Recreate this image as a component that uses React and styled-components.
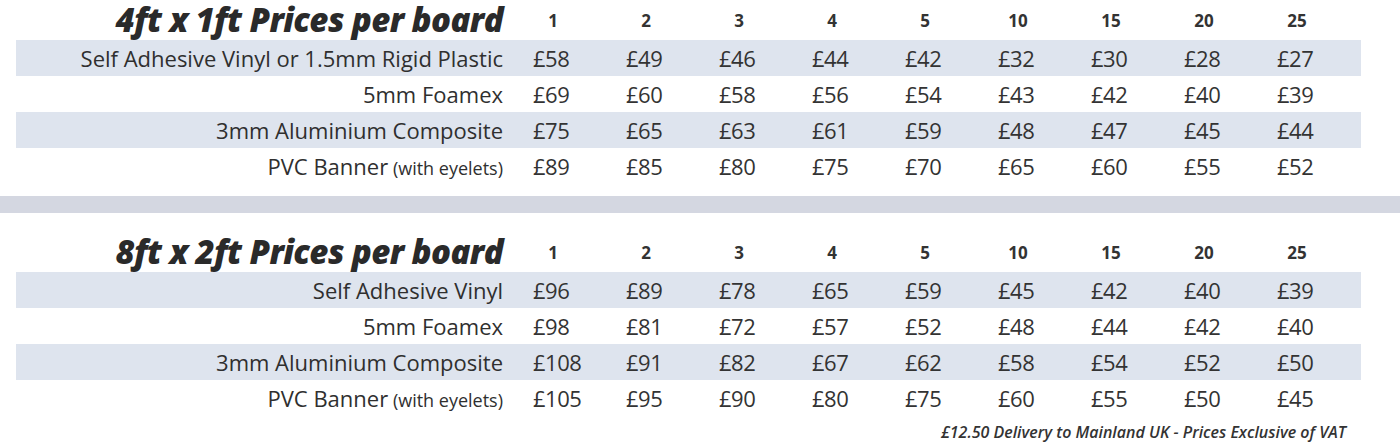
import React from 'react';
import styled, { createGlobalStyle } from 'styled-components';

const GlobalStyle = createGlobalStyle`
  html, body {
    margin: 0;
    padding: 0;
    background: #fff;
  }
  body {
    font-family: 'Open Sans', 'Liberation Sans', sans-serif;
    color: #333;
  }
`;

const QTY = ['1', '2', '3', '4', '5', '10', '15', '20', '25'];

const tables = [
  {
    title: '4ft x 1ft Prices per board',
    rows: [
      { name: 'Self Adhesive Vinyl or 1.5mm Rigid Plastic', prices: [58, 49, 46, 44, 42, 32, 30, 28, 27] },
      { name: '5mm Foamex', prices: [69, 60, 58, 56, 54, 43, 42, 40, 39] },
      { name: '3mm Aluminium Composite', prices: [75, 65, 63, 61, 59, 48, 47, 45, 44] },
      { name: 'PVC Banner', note: '(with eyelets)', prices: [89, 85, 80, 75, 70, 65, 60, 55, 52] },
    ],
  },
  {
    title: '8ft x 2ft Prices per board',
    rows: [
      { name: 'Self Adhesive Vinyl', prices: [96, 89, 78, 65, 59, 45, 42, 40, 39] },
      { name: '5mm Foamex', prices: [98, 81, 72, 57, 52, 48, 44, 42, 40] },
      { name: '3mm Aluminium Composite', prices: [108, 91, 82, 67, 62, 58, 54, 52, 50] },
      { name: 'PVC Banner', note: '(with eyelets)', prices: [105, 95, 90, 80, 75, 60, 55, 50, 45] },
    ],
  },
];

const Page = styled.div`
  width: 1400px;
`;

const Table = styled.section`
  margin-left: 16px;
  width: 1345px;
`;

const Row = styled.div`
  display: grid;
  grid-template-columns: 487px repeat(9, 93px);
  align-items: center;
  height: ${p => (p.$head ? '40px' : '36px')};
  background: ${p => (p.$shaded ? '#dee4ee' : 'transparent')};
`;

const Title = styled.h2`
  margin: 0;
  text-align: right;
  font-family: 'Open Sans', sans-serif;
  font-weight: 800;
  font-style: italic;
  font-size: 33px;
  letter-spacing: -0.6px;
  color: #2a2a2a;
  line-height: 40px;
  white-space: nowrap;
`;

const Qty = styled.div`
  padding-left: 30px;
`;

const QtyText = styled.span`
  display: inline-block;
  width: 40px;
  text-align: center;
  font-weight: 700;
  font-size: 17px;
  color: #333;
`;

const Label = styled.div`
  text-align: right;
  font-size: 22px;
  color: #2f2f2f;
  white-space: nowrap;
`;

const Note = styled.span`
  font-size: 18px;
`;

const Price = styled.div`
  padding-left: 30px;
  font-size: 22px;
  font-weight: 400;
  color: #333;
  letter-spacing: -0.5px;
`;

const Divider = styled.div`
  height: 17px;
  background: #d4d7e1;
  margin: 12px 0 19px;
`;

const Footer = styled.p`
  margin: 0;
  padding-top: 2px;
  width: 1346px;
  text-align: right;
  font-style: italic;
  font-weight: 600;
  font-size: 16px;
  line-height: 29px;
  color: #333;
`;

const PriceTable = ({ title, rows }) => (
  <Table>
    <Row $head>
      <Title>{title}</Title>
      {QTY.map(q => (
        <Qty key={q}>
          <QtyText>{q}</QtyText>
        </Qty>
      ))}
    </Row>
    {rows.map((row, i) => (
      <Row key={row.name} $shaded={i % 2 === 0}>
        <Label>
          {row.name}
          {row.note && <Note> {row.note}</Note>}
        </Label>
        {row.prices.map((p, j) => (
          <Price key={j}>£{p}</Price>
        ))}
      </Row>
    ))}
  </Table>
);

export default function App() {
  return (
    <Page>
      <GlobalStyle />
      <PriceTable {...tables[0]} />
      <Divider />
      <PriceTable {...tables[1]} />
      <Footer>£12.50 Delivery to Mainland UK - Prices Exclusive of VAT</Footer>
    </Page>
  );
}
